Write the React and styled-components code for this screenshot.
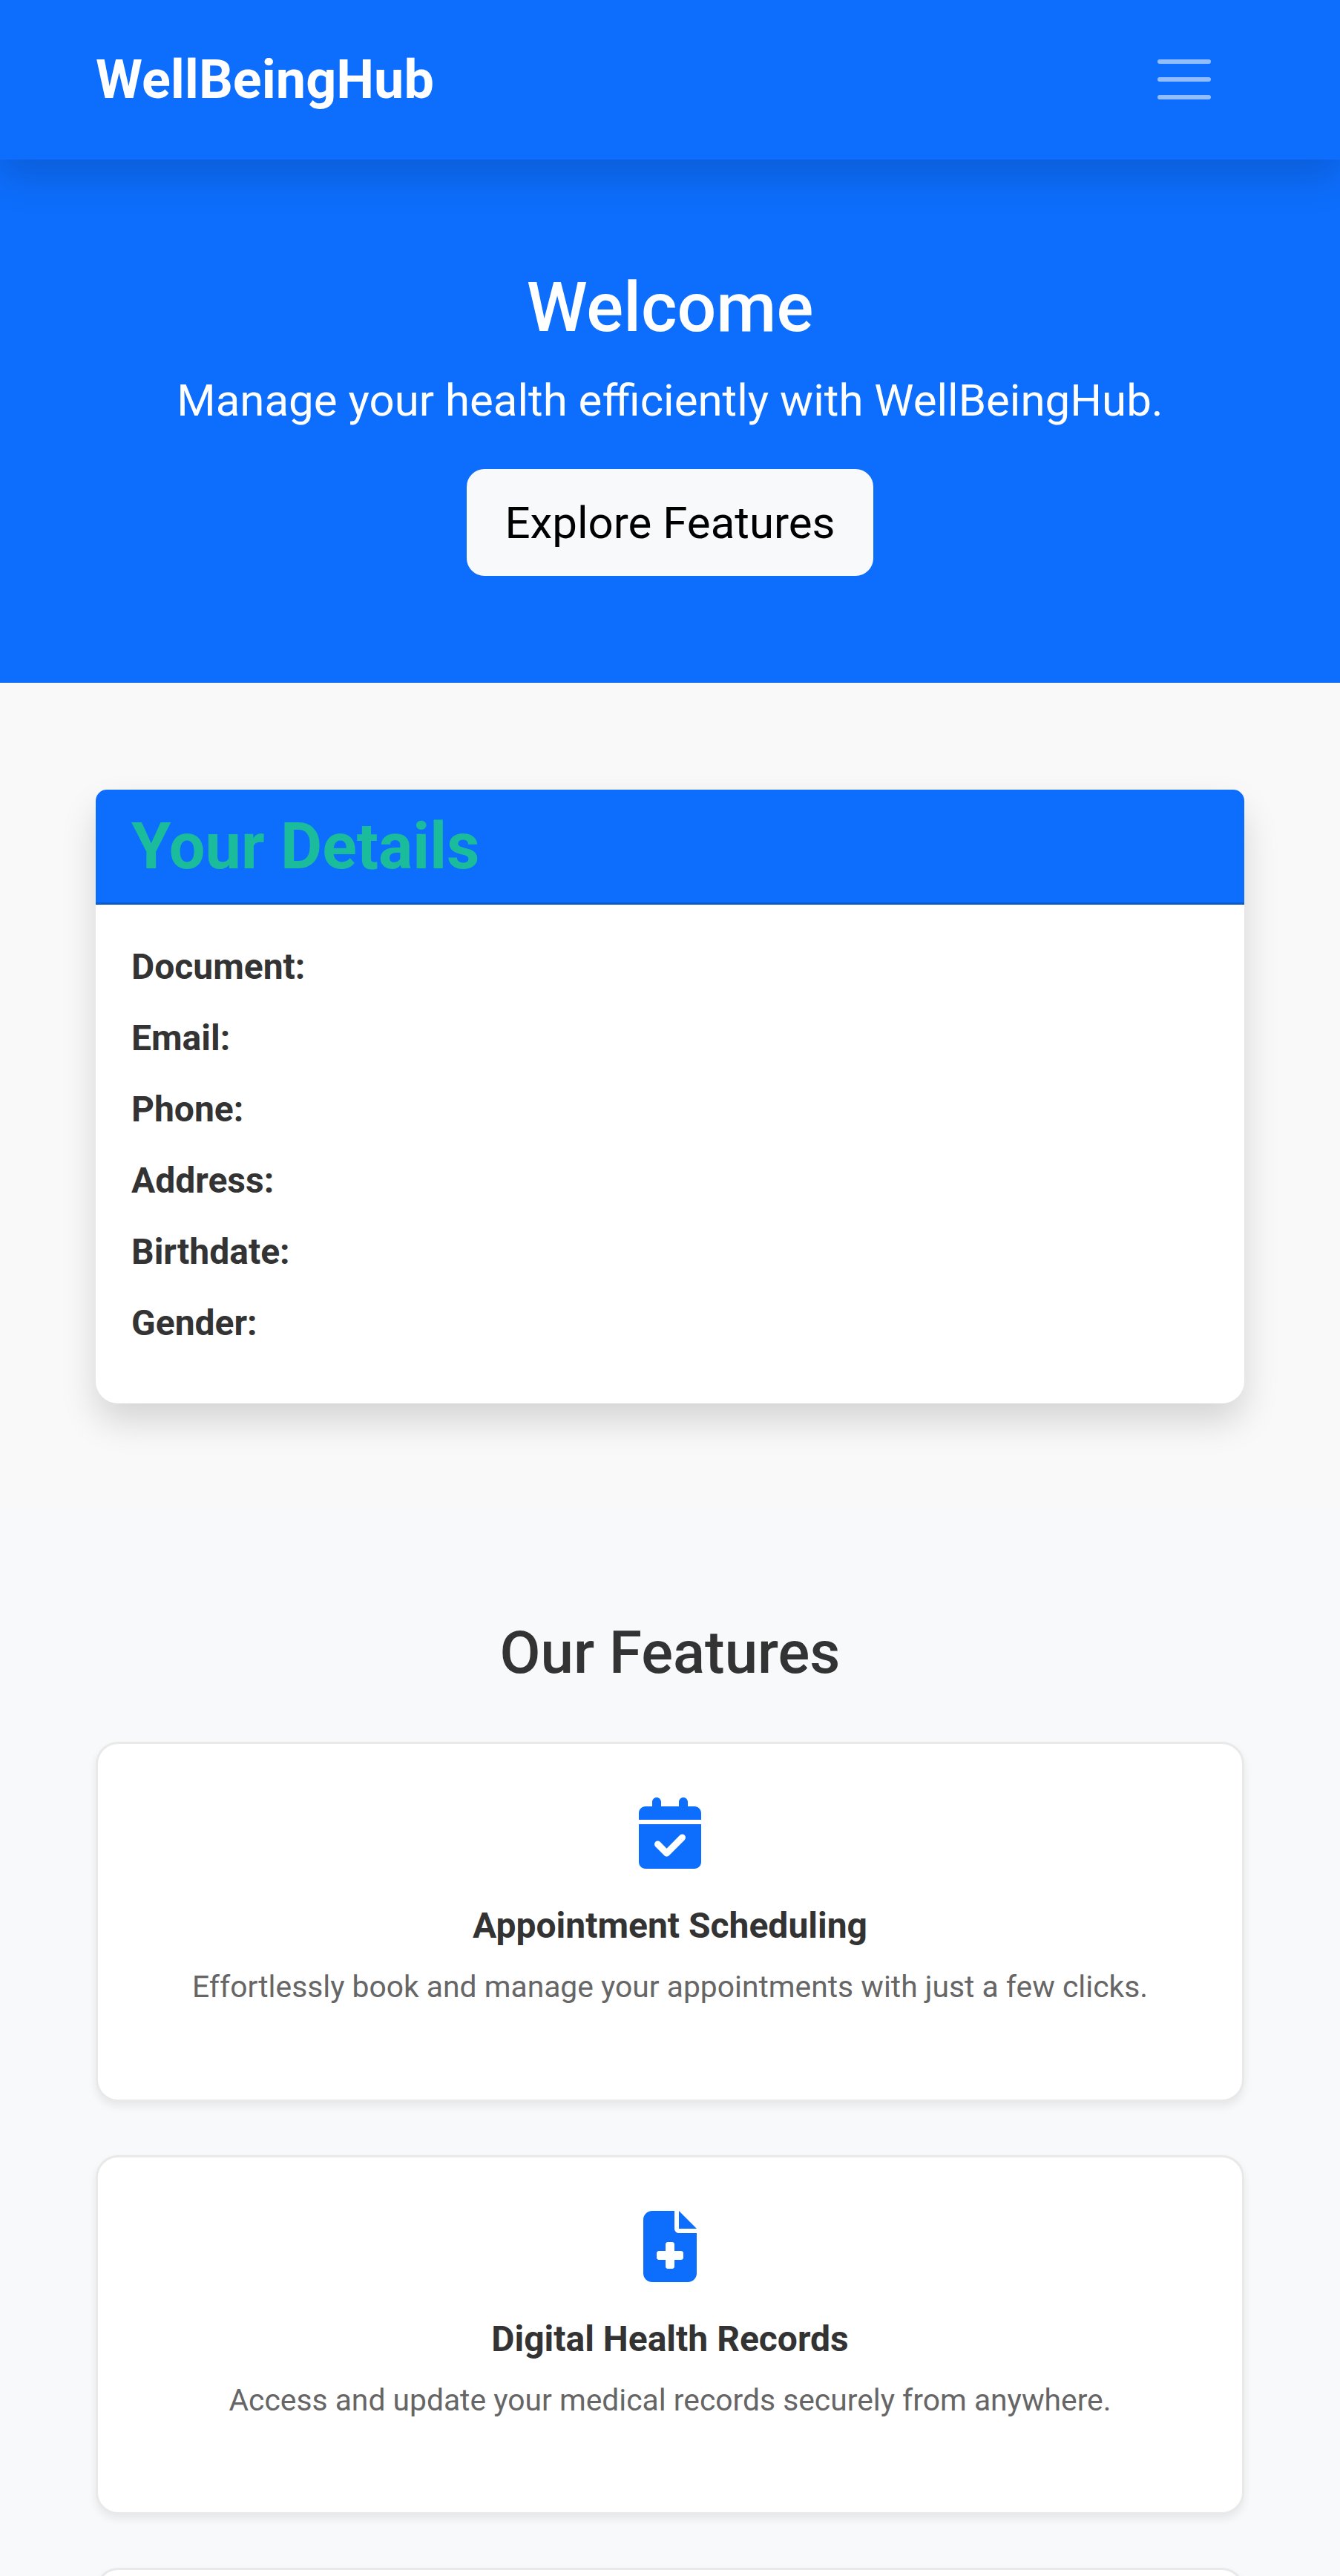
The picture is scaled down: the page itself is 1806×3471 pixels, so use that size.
import React from "react";
import styled, { createGlobalStyle } from "styled-components";
import { FaCalendarCheck, FaFileMedical } from "react-icons/fa6";

const GlobalStyle = createGlobalStyle`
  *, *::before, *::after { box-sizing: border-box; }
  body {
    margin: 0;
    background: #f9f9f9;
    color: #333;
    font-family: Roboto, "Liberation Sans", sans-serif;
    font-size: 48px;
    line-height: 1.5;
  }
`;

const Page = styled.div`
  height: 3471px;
  overflow: hidden;
`;

const Container = styled.div`
  width: 1548px;
  margin: 0 auto;
`;

const Navbar = styled.nav`
  position: relative;
  z-index: 1;
  height: 214.6px;
  background: #0d6efd;
  box-shadow: 0 24px 48px rgba(0, 0, 0, 0.15);
`;

const NavRow = styled(Container)`
  display: flex;
  align-items: center;
  justify-content: space-between;
  height: 100%;
`;

const Brand = styled.a`
  padding-top: 1px;
  color: #fff;
  font-size: 72px;
  font-weight: 700;
  line-height: 108px;
`;

const Toggler = styled.button`
  display: flex;
  padding: 12px 36px;
  border: 0;
  background: transparent;
`;

const TogglerIcon = styled.svg`
  width: 90px;
  height: 90px;
  fill: none;
  stroke: rgba(255, 255, 255, 0.55);
  stroke-width: 2;
  stroke-linecap: round;
`;

const Hero = styled.header`
  display: flex;
  flex-direction: column;
  align-items: center;
  padding: 144px 0;
  background: #0d6efd;
  color: #fff;
  text-align: center;
`;

const HeroTitle = styled.h1`
  margin: 0 0 24.5px;
  font-size: 93.1px;
  font-weight: 500;
  line-height: 1.2;
`;

const Lead = styled.p`
  margin: 0 0 47.5px;
  font-size: 60px;
`;

const HeroButton = styled.button`
  display: flex;
  align-items: center;
  height: 144px;
  padding: 24.5px 48px 23.5px;
  border: 3px solid #f8f9fa;
  border-radius: 24px;
  background: #f8f9fa;
  color: #000;
  font: 400 60px/90px Roboto, "Liberation Sans", sans-serif;
`;

const DetailsSection = styled.section`
  padding: 144px 0;
`;

const DetailsCard = styled.div`
  border-radius: 30px;
  background: #fff;
  box-shadow: 0 24px 48px rgba(0, 0, 0, 0.15);
`;

const DetailsHeader = styled.div`
  padding: 24.6px 48px 23.4px;
  border-bottom: 3px solid rgba(0, 0, 0, 0.176);
  border-radius: 15px 15px 0 0;
  background: #0d6efd;
`;

const DetailsTitle = styled.h2`
  margin: 0;
  color: #1abc9c;
  font-size: 86.4px;
  font-weight: 700;
  line-height: 1.2;
`;

const DetailsBody = styled.div`
  padding: 48.5px 48px 47.5px;
`;

const DetailRow = styled.p`
  margin: 0 0 24px;
  font-weight: 700;
`;

const FeaturesSection = styled.section`
  padding: 144px 0;
  background: #f8f9fa;
`;

const SectionTitle = styled.h2`
  margin: 0 0 72px;
  font-size: 79.85px;
  font-weight: 500;
  line-height: 1.2;
  text-align: center;
`;

const FeatureList = styled.div`
  display: flex;
  flex-direction: column;
  gap: 72px;
`;

const FeatureCard = styled.article`
  display: flex;
  flex-direction: column;
  align-items: center;
  height: 484.8px;
  padding: 72px;
  border: 3px solid #e9e9e9;
  border-radius: 30px;
  background: #fff;
  box-shadow: 0 6px 12px rgba(0, 0, 0, 0.075);
  text-align: center;

  svg {
    height: 96px;
    margin-bottom: 48px;
    color: #0d6efd;
    font-size: 96px;
  }
`;

const FeatureTitle = styled.h3`
  margin: 0 0 24px;
  font-size: 48px;
  font-weight: 700;
  line-height: 1.2;
`;

const FeatureText = styled.p`
  margin: 0;
  color: #666;
  font-size: 40.8px;
`;

const details = ["Document:", "Email:", "Phone:", "Address:", "Birthdate:", "Gender:"];

const features = [
  {
    Icon: FaCalendarCheck,
    title: "Appointment Scheduling",
    text: "Effortlessly book and manage your appointments with just a few clicks.",
  },
  {
    Icon: FaFileMedical,
    title: "Digital Health Records",
    text: "Access and update your medical records securely from anywhere.",
  },
];

export default function App() {
  return (
    <Page>
      <GlobalStyle />
      <Navbar>
        <NavRow>
          <Brand>WellBeingHub</Brand>
          <Toggler aria-label="Toggle navigation">
            <TogglerIcon viewBox="0 0 30 30">
              <path d="M4 7h22M4 15h22M4 23h22" />
            </TogglerIcon>
          </Toggler>
        </NavRow>
      </Navbar>
      <Hero>
        <HeroTitle>Welcome</HeroTitle>
        <Lead>Manage your health efficiently with WellBeingHub.</Lead>
        <HeroButton>Explore Features</HeroButton>
      </Hero>
      <DetailsSection>
        <Container>
          <DetailsCard>
            <DetailsHeader>
              <DetailsTitle>Your Details</DetailsTitle>
            </DetailsHeader>
            <DetailsBody>
              {details.map((label) => (
                <DetailRow key={label}>{label}</DetailRow>
              ))}
            </DetailsBody>
          </DetailsCard>
        </Container>
      </DetailsSection>
      <FeaturesSection>
        <Container>
          <SectionTitle>Our Features</SectionTitle>
          <FeatureList>
            {features.map(({ Icon, title, text }) => (
              <FeatureCard key={title}>
                <Icon />
                <FeatureTitle>{title}</FeatureTitle>
                <FeatureText>{text}</FeatureText>
              </FeatureCard>
            ))}
            <FeatureCard />
          </FeatureList>
        </Container>
      </FeaturesSection>
    </Page>
  );
}
